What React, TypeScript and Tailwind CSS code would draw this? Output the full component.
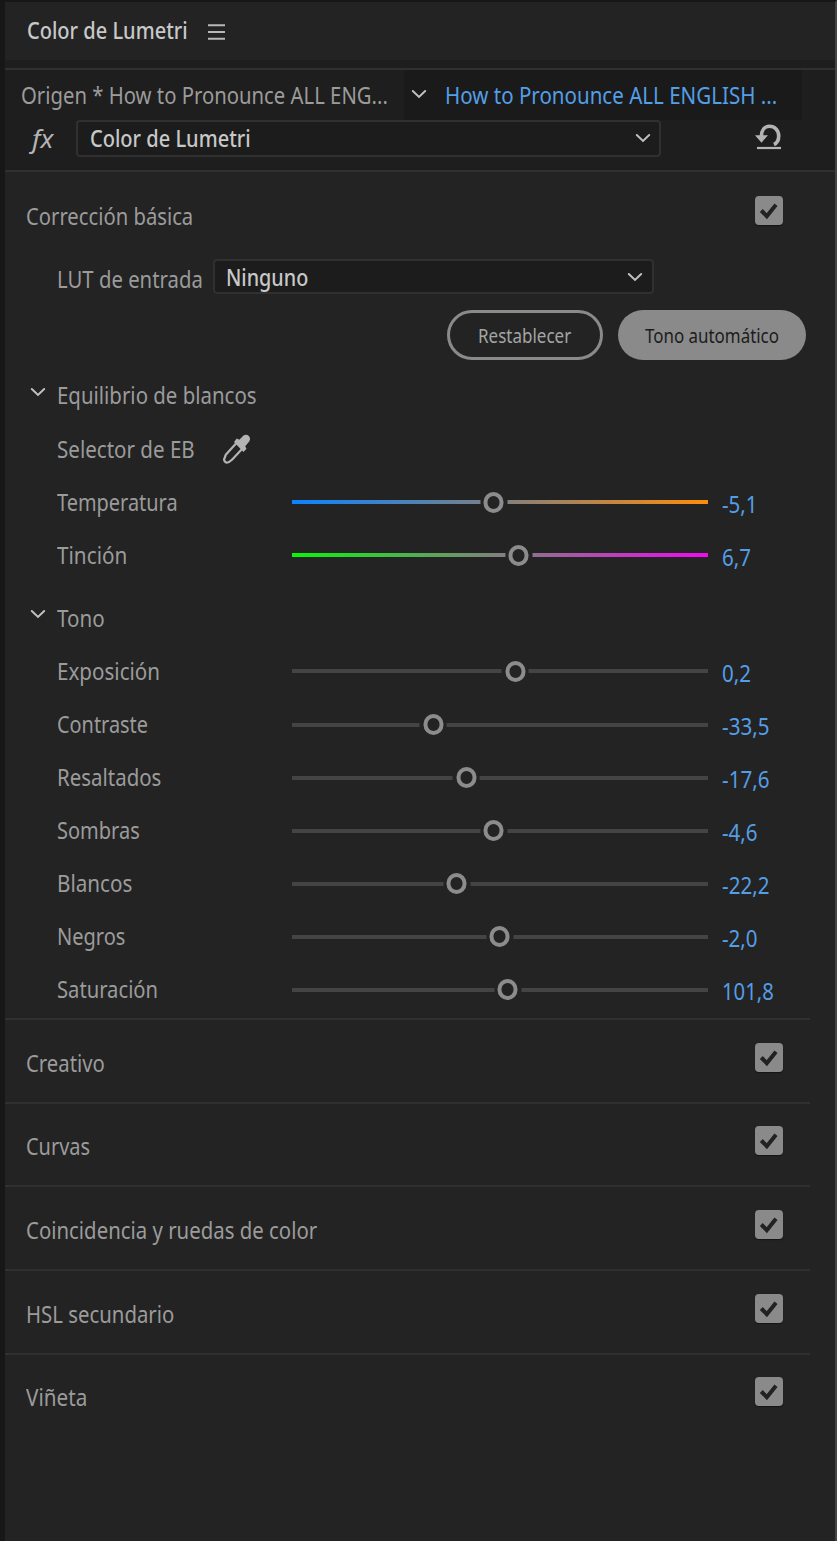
import { useLayoutEffect, useRef, useState } from "react";

type FitProps = { w: number; className?: string; children: string };

/* Condensed label: squeezes a line of text horizontally into the given width. */
function Fit({ w, className = "", children }: FitProps) {
  const ref = useRef<HTMLSpanElement>(null);
  const [scale, setScale] = useState(0.85);
  useLayoutEffect(() => {
    if (ref.current) setScale(w / ref.current.offsetWidth);
  }, [w, children]);
  return (
    <span className={`block shrink-0 whitespace-nowrap ${className}`} style={{ width: w }}>
      <span ref={ref} className="inline-block origin-left" style={{ transform: `scaleX(${scale})` }}>
        {children}
      </span>
    </span>
  );
}

function Chevron({ className = "" }: { className?: string }) {
  return (
    <svg className={`shrink-0 ${className}`} width="16" height="10" viewBox="0 0 16 10" fill="none">
      <path d="M1.800 2 8 7.900l6.200-5.900" stroke="#c0c0c0" strokeWidth="2" strokeLinecap="round" strokeLinejoin="miter" />
    </svg>
  );
}

function Check() {
  return (
    <div className="flex h-[29px] w-7 shrink-0 items-center justify-center rounded bg-[#8a8a8a] shadow-[0_1px_1px_#151515]">
      <svg width="28" height="29" viewBox="0 0 28 29" fill="none">
        <path d="M6.300 14.500 11.800 20.200 21 8.700" stroke="#222" strokeWidth="4" strokeLinejoin="miter" />
      </svg>
    </div>
  );
}

type SliderProps = { label: string; lw: number; value: string; vw: number; knob: number; track?: string };

function Slider({ label, lw, value, vw, knob, track = "bg-[#444]" }: SliderProps) {
  return (
    <div className="flex h-[53.1px] items-center pl-[51.500px]">
      <div className="w-[235.500px]">
        <Fit w={lw}>{label}</Fit>
      </div>
      <div className={`relative top-[0.500px] h-1 w-[416px] ${track}`}>
        <div
          className="absolute -top-[9px] flex h-[22px] w-[27px] -translate-x-1/2 items-center justify-center bg-[#232323]"
          style={{ left: knob - 292 }}
        >
          <div className="h-[21px] w-[20px] rounded-full border-4 border-[#8c8c8c]" />
        </div>
      </div>
      <Fit w={vw} className="ml-[13.500px] pt-1 text-[#549ee6]">{value}</Fit>
    </div>
  );
}

const white: SliderProps[] = [
  { label: "Temperatura", lw: 121, value: "-5,1", vw: 36, knob: 493.5, track: "bg-[linear-gradient(90deg,#0a84ff,#808080_50%,#ff8c0a)]" },
  { label: "Tinción", lw: 70, value: "6,7", vw: 29, knob: 518.5, track: "bg-[linear-gradient(90deg,#0af50a,#808080_50%,#f00af0)]" },
];

const tone: SliderProps[] = [
  { label: "Exposición", lw: 103, value: "0,2", vw: 29, knob: 515 },
  { label: "Contraste", lw: 91, value: "-33,5", vw: 47.5, knob: 433 },
  { label: "Resaltados", lw: 104, value: "-17,6", vw: 47.5, knob: 466 },
  { label: "Sombras", lw: 83, value: "-4,6", vw: 36, knob: 493.5 },
  { label: "Blancos", lw: 75, value: "-22,2", vw: 47.5, knob: 456.5 },
  { label: "Negros", lw: 68.5, value: "-2,0", vw: 36, knob: 499.5 },
  { label: "Saturación", lw: 101, value: "101,8", vw: 52, knob: 507.5 },
];

const sections = [
  { label: "Creativo", w: 79 },
  { label: "Curvas", w: 64 },
  { label: "Coincidencia y ruedas de color", w: 291 },
  { label: "HSL secundario", w: 148 },
  { label: "Viñeta", w: 61 },
];

function Group({ label, w }: { label: string; w: number }) {
  return (
    <div className="flex h-[53.1px] items-center pl-[25px]">
      <Chevron className="mb-[7px]" />
      <Fit w={w} className="ml-[10.500px]">{label}</Fit>
    </div>
  );
}

export default function App() {
  return (
    <div className="flex h-[1541px] w-[837px] flex-col overflow-hidden border-l-[5px] border-r-2 border-t-2 border-l-[#171717] border-r-[#444] border-t-[#171717] bg-[#232323] font-['Noto_Sans',sans-serif] text-[23.400px] leading-8 text-[#9b9b9b]">
      <header className="flex h-[58px] shrink-0 items-center pl-[22px] text-[#c8c8c8]">
        <Fit w={161} className="mb-[2px] font-medium">Color de Lumetri</Fit>
        <svg className="ml-5 mt-[2px]" width="17" height="16" viewBox="0 0 17 16">
          <path d="M0 1.200h17M0 8h17M0 14.800h17" stroke="#b8b8b8" strokeWidth="2" />
        </svg>
      </header>
      <div className="h-2 shrink-0 bg-[#1e1e1e]" />

      <div className="h-[103.500px] shrink-0 border-y-2 border-[#303030] bg-[#1e1e1e]">
        <div className="flex h-[50px]">
          <div className="flex w-[399px] items-center pl-4">
            <Fit w={367}>Origen * How to Pronounce ALL ENG...</Fit>
          </div>
          <div className="flex w-[398px] items-center bg-[#1a1a1a] pl-[6.500px]">
            <Chevron className="mb-[3px]" />
            <Fit w={332} className="ml-[18px] text-[#549ee6]">How to Pronounce ALL ENGLISH ...</Fit>
          </div>
        </div>
        <div className="flex items-center">
          <Fit w={21} className="mb-[2px] ml-[26.500px] text-[25.500px] italic text-[#b4b4b4]">fx</Fit>
          <div className="ml-[23.500px] flex h-[37px] w-[585px] items-center justify-between rounded-[4px] border-2 border-[#303030] bg-[#1c1c1c] pl-[11.500px] pr-2 font-medium text-[#c8c8c8]">
            <Fit w={161} className="mb-[2px]">Color de Lumetri</Fit>
            <Chevron className="mb-[1px]" />
          </div>
          <svg className="mb-1 ml-[94px]" width="27" height="26" viewBox="0 0 27 26" fill="none">
            <path d="M6.300 13C6.300 6.300 9.500 2.300 14.500 2.300c5.200 0 9.200 3.700 9.200 9.700 0 4-1.700 7.200-4.800 8.500" stroke="#b4b4b4" strokeWidth="3.600" />
            <path d="M0 11.200h13l-6.500 7.500z" fill="#b4b4b4" />
            <path d="M2 24h24" stroke="#b4b4b4" strokeWidth="2.200" />
          </svg>
        </div>
      </div>

      <div className="flex h-[87.500px] shrink-0 justify-between pl-[20.500px] pr-[52px] pt-[24.500px]">
        <Fit w={167} className="pt-1">Corrección básica</Fit>
        <Check />
      </div>
      <div className="flex h-[35px] shrink-0 items-center pl-[51.500px]">
        <Fit w={146} className="pt-1">LUT de entrada</Fit>
        <div className="ml-[10px] flex h-[35px] w-[441px] items-center justify-between rounded-[4px] border-2 border-[#303030] bg-[#1c1c1c] pl-[11.500px] pr-[9px] font-medium text-[#c8c8c8]">
          <Fit w={82}>Ninguno</Fit>
          <Chevron />
        </div>
      </div>
      <div className="mb-[9px] mt-4 flex h-[49.500px] shrink-0 gap-[15px] pl-[441.500px] text-[19.200px]">
        <button className="flex w-[156.500px] items-center justify-center rounded-full border-[3px] border-[#8a8a8a] pt-[2px] text-[#a4a4a4]">
          <Fit w={93}>Restablecer</Fit>
        </button>
        <button className="flex w-[188px] items-center justify-center rounded-full bg-[#8a8a8a] pt-[2px] text-[#1c1c1c]">
          <Fit w={134}>Tono automático</Fit>
        </button>
      </div>

      <Group label="Equilibrio de blancos" w={200} />
      <div className="flex h-[53.500px] shrink-0 items-center pl-[51.500px]">
        <Fit w={138} className="pt-[1px]">Selector de EB</Fit>
        <svg className="ml-[27px] mt-[2px]" width="28" height="30" viewBox="0 0 28 30" fill="none">
          <path d="M14 9.500 4 20.500c-.8 1-.7 2.200-1.300 3.400-1.500 2 .3 5 2.800 4.600 2-.2 3-1.800 4.500-2.800L20 15" stroke="#b4b4b4" strokeWidth="2.200" strokeLinejoin="round" />
          <path d="M12 8l2.800-3.500 2.500 1.300L21.500 1.500C25-1.200 30 3 27.200 7.500l-4 4.700 1.300 2.500-3 3.300z" fill="#b4b4b4" />
        </svg>
      </div>
      {white.map((s) => <Slider key={s.label} {...s} />)}
      <div className="h-[10px] shrink-0" />
      <Group label="Tono" w={47.5} />
      {tone.map((s) => <Slider key={s.label} {...s} />)}

      <div className="mr-[25px] mt-[2px]">
        {sections.map((s) => (
          <div key={s.label} className="flex h-[83.650px] justify-between border-t-2 border-[#303030] pl-[20.500px] pr-[27px] pt-[22.600px]">
            <Fit w={s.w} className="pt-1">{s.label}</Fit>
            <Check />
          </div>
        ))}
      </div>
    </div>
  );
}
